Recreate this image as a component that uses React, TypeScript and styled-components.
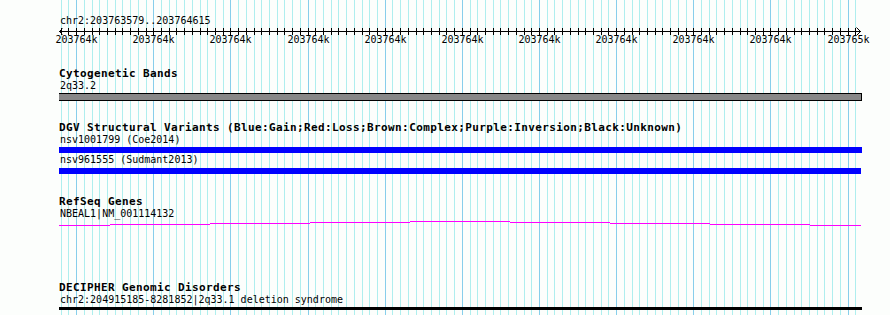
import styled, { createGlobalStyle } from "styled-components"

const START = 203763579
const END = 203764615
const CANVAS_LEFT = 59
const CANVAS_WIDTH = 803

// GD-style mapping: 800 px for the whole segment, starting at x = 60
const toX = (pos: number) => 60 + ((pos - START + 0.5) * 800) / (END - START + 1)
const px = (pos: number) => Math.floor(toX(pos))

// sprintf("%.0f") style rounding, halves go to the even number
const roundHalfEven = (v: number) => {
  const f = Math.floor(v)
  const diff = v - f
  if (diff > 0.5) return f + 1
  if (diff < 0.5) return f
  return f % 2 === 0 ? f : f + 1
}

const gridPositions: number[] = []
for (let p = Math.ceil(START / 10) * 10; p <= END; p += 10) gridPositions.push(p)

// intron "hat" as rasterised by the server: 1px steps every 100px
const hatSteps = [
  [59, 110, 225],
  [110, 210, 224],
  [210, 310, 223],
  [310, 410, 222],
  [410, 510, 221],
  [510, 610, 222],
  [610, 710, 223],
  [710, 810, 224],
  [810, 861, 225],
]

const tracks = [
  {
    title: "Cytogenetic Bands",
    features: [{ label: "2q33.2", kind: "band" as const }],
  },
  {
    title:
      "DGV Structural Variants (Blue:Gain;Red:Loss;Brown:Complex;Purple:Inversion;Black:Unknown)",
    features: [
      { label: "nsv1001799 (Coe2014)", kind: "gain" as const },
      { label: "nsv961555 (Sudmant2013)", kind: "gain" as const, short: true },
    ],
  },
]

export default function App() {
  return (
    <>
      <GlobalStyle />
      <Panel>
        <GridLayer width={890} height={315}>
          {gridPositions.map((p) => (
            <rect
              key={p}
              x={px(p)}
              y={0}
              width={1}
              height={315}
              fill={p % 100 === 0 ? "#87ceeb" : "#aeeeee"}
            />
          ))}
        </GridLayer>

        <Content>
          <ChrLabel>chr2:203763579..203764615</ChrLabel>
          <Ruler />

          {tracks.map((track, i) => (
            <Track key={track.title} $first={i === 0}>
              <TrackTitle>{track.title}</TrackTitle>
              {track.features.map((f, j) =>
                f.kind === "band" ? (
                  <div key={f.label}>
                    <FeatureLabel>{f.label}</FeatureLabel>
                    <BandBar />
                  </div>
                ) : (
                  <div key={f.label}>
                    <FeatureLabel $gap={j > 0 ? 1 : 0}>{f.label}</FeatureLabel>
                    <VariantBar $short={"short" in f && f.short} $gap={j > 0 ? 2 : 1} />
                  </div>
                )
              )}
            </Track>
          ))}

          <Track $gap={22}>
            <TrackTitle>RefSeq Genes</TrackTitle>
            <FeatureLabel>NBEAL1|NM_001114132</FeatureLabel>
            <HatLine width={CANVAS_WIDTH} height={6}>
              {hatSteps.map(([x1, x2, y]) => (
                <rect
                  key={x1}
                  x={x1 - CANVAS_LEFT}
                  y={y - 220}
                  width={x2 - x1}
                  height={1}
                  fill="#ff00ff"
                />
              ))}
            </HatLine>
          </Track>

          <Track $gap={56}>
            <TrackTitle>DECIPHER Genomic Disorders</TrackTitle>
            <FeatureLabel>chr2:204915185-8281852|2q33.1 deletion syndrome</FeatureLabel>
            <DisorderBar />
          </Track>
        </Content>
      </Panel>
    </>
  )
}

const Ruler = () => {
  const majors = gridPositions.filter((p) => p % 100 === 0)
  const y = 4
  return (
    <RulerSvg width={CANVAS_WIDTH} height={20}>
      <rect x={0} y={y} width={CANVAS_WIDTH - 1} height={1} fill="#000" />
      <path d={`M0.5 ${y + 0.5} L3.5 ${y - 2.5} M0.5 ${y + 0.5} L3.5 ${y + 3.5}`} stroke="#000" fill="none" />
      <path
        d={`M${CANVAS_WIDTH - 1.5} ${y + 0.5} L${CANVAS_WIDTH - 5.5} ${y - 3.5} M${CANVAS_WIDTH - 1.5} ${y + 0.5} L${CANVAS_WIDTH - 5.5} ${y + 4.5}`}
        stroke="#000"
        fill="none"
      />
      {gridPositions.map((p) => (
        <rect key={p} x={px(p) - CANVAS_LEFT} y={y - 3} width={1} height={7} fill="#000" />
      ))}
      {majors.map((p) => (
        <RulerText key={p} x={px(p) - CANVAS_LEFT + 0.5} y={16} textAnchor="middle">
          {`${roundHalfEven(p / 1000)}k`}
        </RulerText>
      ))}
    </RulerSvg>
  )
}

const GlobalStyle = createGlobalStyle`
  html, body {
    margin: 0;
    padding: 0;
    background: #fcfefc;
  }
`

const Panel = styled.div`
  position: relative;
  width: 890px;
  height: 315px;
  padding-left: ${CANVAS_LEFT}px;
  box-sizing: border-box;
  overflow: hidden;
  background: #fcfefc;
  font-family: "DejaVu Sans Mono", "Liberation Mono", monospace;
  color: #000;
`

const GridLayer = styled.svg`
  position: absolute;
  top: 0;
  left: 0;
  display: block;
`

const Content = styled.div`
  position: relative;
  width: ${CANVAS_WIDTH}px;
  display: flex;
  flex-direction: column;
`

const ChrLabel = styled.div`
  margin-top: 15px;
  padding-left: 1px;
  font-size: 10px;
  line-height: 12px;
  white-space: nowrap;
`

const RulerSvg = styled.svg`
  display: block;
  overflow: visible;
`

const RulerText = styled.text`
  font-family: "DejaVu Sans Mono", "Liberation Mono", monospace;
  font-size: 10px;
  fill: #000;
`

const Track = styled.section<{ $first?: boolean; $gap?: number }>`
  display: flex;
  flex-direction: column;
  margin-top: ${(p) => (p.$first ? 21 : p.$gap ?? 21)}px;
`

const TrackTitle = styled.div`
  font-size: 11px;
  font-weight: bold;
  letter-spacing: 0.38px;
  line-height: 12px;
  white-space: nowrap;
`

const FeatureLabel = styled.div<{ $gap?: number }>`
  margin-top: ${(p) => p.$gap ?? 0}px;
  padding-left: 1px;
  font-size: 10px;
  line-height: 12px;
  white-space: nowrap;
`

const BandBar = styled.div`
  margin-top: 1px;
  height: 6px;
  width: ${CANVAS_WIDTH - 1}px;
  background: #888888;
  border: 1px solid #000;
  border-left: none;
`

const VariantBar = styled.div<{ $short?: boolean; $gap: number }>`
  margin-top: ${(p) => p.$gap}px;
  height: 6px;
  width: ${(p) => (p.$short ? CANVAS_WIDTH - 1 : CANVAS_WIDTH)}px;
  background: #0000ff;
`

const HatLine = styled.svg`
  display: block;
`

const DisorderBar = styled.div`
  margin-top: 1px;
  height: 3px;
  width: ${CANVAS_WIDTH}px;
  background: #000;
`
